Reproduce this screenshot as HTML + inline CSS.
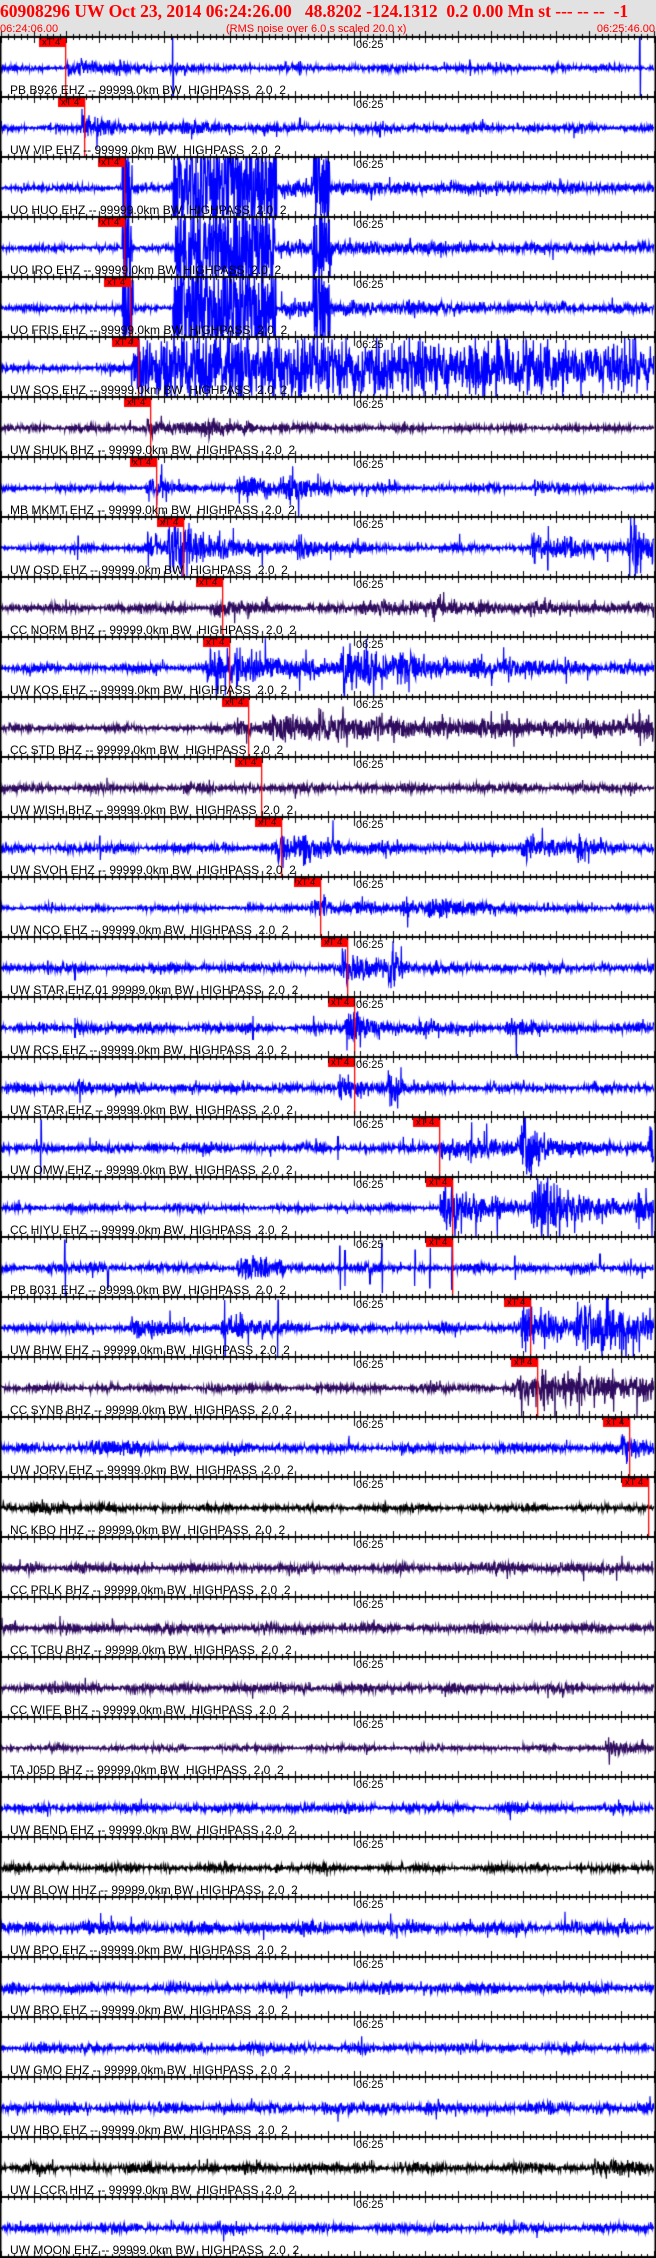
<!DOCTYPE html>
<html><head><meta charset="utf-8">
<style>
html,body{margin:0;padding:0;background:#fff;}
body{width:656px;height:2258px;position:relative;overflow:hidden;font-family:"Liberation Sans",sans-serif;}
#hdr{position:absolute;left:0;top:0;width:656px;height:37px;background:#e2e2e2;}
.t{position:absolute;white-space:pre;}
#title{left:0;top:1px;font:bold 17.5px "Liberation Serif",serif;color:#f00;line-height:20px;}
.sub{top:23px;font-size:11px;line-height:12px;color:#f00;}
canvas{position:absolute;left:0;top:0;}
.lab{position:absolute;left:10px;font-size:12px;line-height:12px;color:#000;white-space:pre;}
.tm{position:absolute;left:356px;font-size:11px;line-height:11px;color:#000;}
.pk{position:absolute;font-size:9.5px;line-height:9px;color:#200;white-space:pre;}
</style></head><body>
<div id="hdr"></div>
<canvas id="c" width="656" height="2258"></canvas>
<div class="t" id="title">60908296 UW Oct 23, 2014 06:24:26.00   48.8202 -124.1312  0.2 0.00 Mn st --- -- --  -1</div>
<div class="t sub" style="left:0">06:24:06.00</div>
<div class="t sub" style="left:226px">(RMS noise over 6.0 s scaled 20.0 x)</div>
<div class="t sub" style="right:1px">06:25:46.00</div>
<div id="ov"></div>
<script>
(function(){
var B='#0000ff',P='#2e0b5e',K='#000000';
var T=[
['PB','B926','EHZ',B,66,3,[[66,6,40]],[],[[173,40],[640,40],[120,8],[300,7],[470,8]]],
['UW','VIP','EHZ',B,85,3.5,[[80,12,30],[180,6,30]],[],[[300,10],[380,9]]],
['UO','HUO','EHZ',B,125,3,[[280,5,200]],[[122,132,45],[173,277,45],[313,330,45]],[]],
['UO','IRO','EHZ',B,125,3,[[280,5,200]],[[122,132,45],[175,275,45],[313,330,45]],[]],
['UO','FRIS','EHZ',B,131,3,[[280,5,200]],[[122,133,45],[173,277,45],[313,330,45]],[]],
['UW','SOS','EHZ',B,139,3,[[131,30,900]],[],[]],
['UW','SHUK','BHZ',P,151,3,[[145,8,50],[205,5,30]],[],[]],
['MB','MKMT','EHZ',B,157,3,[[145,10,20],[235,12,30],[285,18,25],[535,5,20]],[],[[535,8]]],
['UW','OSD','EHZ',B,184,3.5,[[145,14,20],[168,28,40],[295,12,20],[530,12,50],[628,30,25]],[],[[78,12],[548,22]]],
['CC','NORM','BHZ',P,223,3.5,[[212,7,30],[360,5,200]],[],[]],
['UW','KOS','EHZ',B,230,4,[[205,20,80],[340,20,60],[470,5,80]],[],[]],
['CC','STD','BHZ',P,249,3,[[235,7,30],[268,9,500],[638,12,10]],[],[]],
['UW','WISH','BHZ',P,262,4,[],[],[]],
['UW','SVOH','EHZ',B,282,4,[[275,14,30],[300,10,30],[520,12,30],[575,10,20]],[],[[100,12],[305,16]]],
['UW','NCO','EHZ',B,321,2.5,[[310,7,50],[400,8,20],[428,6,60]],[],[]],
['UW','STAR','EHZ.01',B,348,4,[[340,15,30],[388,28,8]],[],[[75,12],[48,7]]],
['UW','RCS','EHZ',B,355,4,[[343,15,35],[505,8,20],[75,7,10]],[],[[253,12],[75,10]]],
['UW','STAR','EHZ',B,355,4,[[338,12,20],[388,30,8],[75,8,10]],[],[]],
['UW','OMW','EHZ',B,440,4,[[440,8,80],[520,30,20],[648,30,10]],[],[[41,28],[338,12]]],
['CC','HIYU','EHZ',B,453,3,[[440,25,40],[530,28,50],[635,15,20]],[],[]],
['PB','B031','EHZ',B,453,4,[],[[238,268,11],[275,285,9]],[[65,28],[108,20],[340,22],[345,18],[370,16],[382,25],[415,18],[430,20],[452,22],[515,12],[600,14]]],
['UW','BHW','EHZ',B,531,4,[[520,30,25],[575,22,90],[130,8,30],[220,10,30]],[],[[225,28],[278,28]]],
['CC','SYNB','BHZ',P,538,3.5,[[512,10,40],[540,14,130]],[],[]],
['UW','JORV','EHZ',B,630,4,[[620,13,20],[90,7,30]],[],[]],
['NC','KBO','HHZ',K,649,3,[[30,5,40]],[],[]],
['CC','PRLK','BHZ',P,0,4,[[480,3,80]],[],[]],
['CC','TCBU','BHZ',P,0,4,[],[],[]],
['CC','WIFE','BHZ',P,0,4,[],[],[]],
['TA','J05D','BHZ',P,0,2.5,[[605,10,15]],[],[]],
['UW','BEND','EHZ',B,0,4,[],[],[]],
['UW','BLOW','HHZ',K,0,3.5,[],[],[]],
['UW','BPO','EHZ',B,0,6,[],[],[]],
['UW','BRO','EHZ',B,0,5,[],[],[]],
['UW','GMO','EHZ',B,0,4,[],[],[]],
['UW','HBO','EHZ',B,0,5,[],[],[]],
['UW','LCCR','HHZ',K,0,4.5,[[590,5,60]],[],[]],
['UW','MOON','EHZ',B,0,4,[],[],[]]
];
var s=12345;function R(){s|=0;s=s+0x6D2B79F5|0;var t=Math.imul(s^s>>>15,1|s);t=t+Math.imul(t^t>>>7,61|t)^t;return((t^t>>>14)>>>0)/4294967296;}
var c=document.getElementById('c').getContext('2d');
var ov=document.getElementById('ov'),h='';
for(var i=0;i<T.length;i++){
 var d=T[i],py=37+60*i,cy=py+31;
 c.save();c.beginPath();c.rect(1,py+1,654,59);c.clip();
 c.strokeStyle=d[3];c.lineWidth=1.2;c.beginPath();
 var first=true;
 for(var x=1;x<=654;x+=1/3){
  var e=d[5]*0.9*(0.8+0.4*Math.sin(x/37+i)*Math.sin(x/11+i*2));
  for(var a=0;a<d[6].length;a++){var v=d[6][a];if(x>=v[0]){e+=v[1]*Math.min(1,(x-v[0]+1)/4)*Math.exp(-(x-v[0])/v[2]);}}
  var sat=false;
  for(var a=0;a<d[7].length;a++){var v=d[7][a];if(x>=v[0]&&x<=v[1]){e=Math.max(e,v[2]*(0.6+0.6*R()));sat=true;}}
  var r=sat?(R()*2-1):(R()+R()+R()+R()-2)/1.1;
  if(!sat&&R()<0.05)r*=2.4;
  for(var a=0;a<d[8].length;a++){var v=d[8][a];if(Math.abs(x-v[0])<0.5)r=(R()<.5?-1:1)*v[1]/Math.max(e,1);}
  var y=cy+e*r;
  if(first){c.moveTo(x,y);first=false;}else c.lineTo(x,y);
 }
 c.stroke();c.restore();
 if(d[4]){c.fillStyle='#ff0000';c.fillRect(d[4]-27,py+1,27,9);c.fillRect(d[4]-1,py+1,1.3,60);
  h+='<div class="pk" style="left:'+(d[4]-24)+'px;top:'+(py+1)+'px">xT 4</div>';}
 var lab=d[0]+' '+d[1]+' '+d[2]+(d[2].indexOf('.')>0?' ':' -- ')+'99999.0km BW  HIGHPASS  2.0  2';
 h+='<div class="lab" style="top:'+(py+47)+'px">'+lab+'</div>';
 h+='<div class="tm" style="top:'+(py+3)+'px">06:25</div>';
}
ov.innerHTML=h;
c.fillStyle='#000';
for(var k=0;k<=37;k++){
 var y=37+60*k;
 c.fillRect(0,y-1,656,2);
 for(var t=0;t<=100;t++){
  var x=Math.round(1+6.53*t);
  var up=3,dn=3;
  if(t%5==0){up=6;dn=6;}
  if(t==54){up=6;dn=9;}
  c.fillRect(x,y-up,1,up+dn);
 }
}
c.fillRect(0,37,1.5,2221);c.fillRect(654.5,37,1.5,2221);
})();
</script>
</body></html>
